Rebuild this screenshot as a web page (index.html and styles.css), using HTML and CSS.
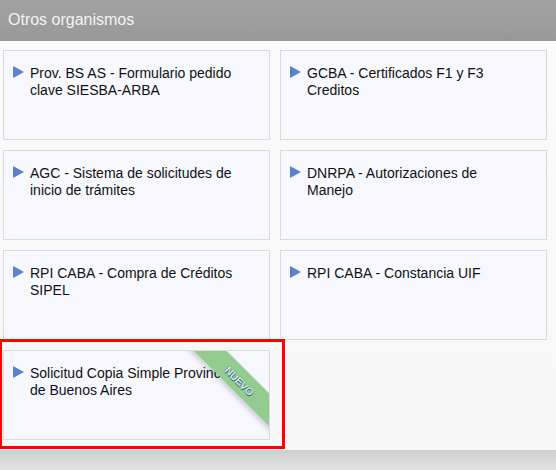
FILE: index.html
```html
<!DOCTYPE html>
<html lang="es">
<head>
    <meta charset="UTF-8">
    <title>Otros organismos</title>
    <link rel="stylesheet" href="styles.css">
</head>
<body>

<div class="box">
    <div class="box-title">Otros organismos</div>
    <div class="box-body">
        <div class="grid">
            <a class="tile" href="#"><span class="arrow"></span><span class="label">Prov. BS AS - Formulario pedido clave SIESBA-ARBA</span></a>
            <a class="tile" href="#"><span class="arrow"></span><span class="label">GCBA - Certificados F1 y F3 Creditos</span></a>
            <a class="tile" href="#"><span class="arrow"></span><span class="label">AGC - Sistema de solicitudes de inicio de trámites</span></a>
            <a class="tile" href="#"><span class="arrow"></span><span class="label">DNRPA - Autorizaciones de Manejo</span></a>
            <a class="tile" href="#"><span class="arrow"></span><span class="label">RPI CABA - Compra de Créditos SIPEL</span></a>
            <a class="tile" href="#"><span class="arrow"></span><span class="label">RPI CABA - Constancia UIF</span></a>
            <div class="tile-wrap">
                <a class="tile" href="#"><span class="arrow"></span><span class="label">Solicitud Copia Simple Provincia de Buenos Aires</span>
                    <span class="ribbon"><span>Nuevo</span></span>
                </a>
                <div class="highlight"></div>
            </div>
        </div>
    </div>
</div>

</body>
</html>
```

FILE: styles.css
```css
html, body {
    margin: 0;
    padding: 0;
}

body {
    font-family: "Liberation Sans", Arial, sans-serif;
    background: linear-gradient(#cdcdcd, #e3e3e3) no-repeat;
    background-color: #e3e3e3;
    background-position: 0 449px;
    background-size: 100% 21px;
    height: 470px;
    overflow: hidden;
}

.box-title {
    height: 41px;
    line-height: 40px;
    padding-left: 8px;
    font-size: 16px;
    color: #f4f4f4;
    background: linear-gradient(#a2a2a2, #989898);
}

.box-body {
    border-top: 2px solid #ffffff;
    background: linear-gradient(#fafafa, #f7f7f7);
    padding: 7px 9px 10px 3px;
}

.grid {
    display: grid;
    grid-template-columns: 267px 267px;
    grid-auto-rows: 90px;
    column-gap: 10px;
    row-gap: 10px;
}

.tile-wrap {
    position: relative;
}

.tile {
    position: relative;
    display: flex;
    align-items: flex-start;
    box-sizing: border-box;
    height: 90px;
    padding: 14px 10px 0 9px;
    border: 1px solid #dadada;
    background-color: #f7f8fd;
    color: #111111;
    text-decoration: none;
    font-size: 14px;
    line-height: 17px;
    overflow: hidden;
}

.arrow {
    flex: none;
    width: 0;
    height: 0;
    margin-top: 1px;
    margin-right: 6px;
    border-top: 6.5px solid transparent;
    border-bottom: 6.5px solid transparent;
    border-left: 11px solid #5b80cc;
}

.label {
    padding-right: 10px;
}

.ribbon {
    position: absolute;
    top: 18px;
    right: -36px;
    width: 130px;
    height: 23px;
    transform: rotate(45deg);
    background-color: #92cd8f;
    box-shadow: -2px 3px 5px rgba(0, 0, 0, 0.18);
    text-align: center;
    line-height: 23px;
}

.ribbon span {
    color: #ffffff;
    font-size: 10px;
    text-transform: uppercase;
    text-shadow: 0 0 2px #2f5f86, 1px 1px 0 #3d6a8c;
}

.highlight {
    position: absolute;
    top: -11px;
    left: -4px;
    width: 280px;
    height: 104px;
    border: 3px solid #ff0000;
    pointer-events: none;
}
```
